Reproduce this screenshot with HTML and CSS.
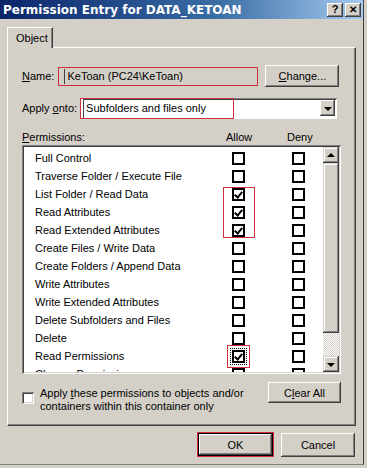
FILE: index.html
```html
<!DOCTYPE html>
<html lang="en">
<head>
    <meta charset="UTF-8">
    <title>Permission Entry for DATA_KETOAN</title>
    <link rel="stylesheet" href="styles.css">
</head>
<body>

<div class="window">
    <div class="titlebar">
        <span class="title">Permission Entry for DATA_KETOAN</span>
        <span class="title-btn">?</span>
        <span class="title-btn close">&#x2715;</span>
    </div>

    <div class="content">
        <div class="tabs">
            <span class="tab">Object</span>
        </div>

        <div class="tab-page">
            <div class="name-row">
                <span class="label"><u>N</u>ame:</span>
                <span class="mark name-mark">
                    <span class="name-field">KeToan (PC24\KeToan)</span>
                </span>
                <span class="button change-btn"><u>C</u>hange...</span>
            </div>

            <div class="apply-row">
                <span class="label">Apply <u>o</u>nto:</span>
                <div class="combo">
                    <span class="mark combo-mark">Subfolders and files only</span>
                    <span class="combo-arrow"><span class="tri-down"></span></span>
                </div>
            </div>

            <div class="perm-head">
                <span><u>P</u>ermissions:</span>
                <span class="col-allow">Allow</span>
                <span class="col-deny">Deny</span>
            </div>

            <div class="listbox">
                <div class="rows">
                    <div class="row"><span>Full Control</span><span class="cb"></span><span class="cb"></span></div>
                    <div class="row"><span>Traverse Folder / Execute File</span><span class="cb"></span><span class="cb"></span></div>
                    <div class="row"><span>List Folder / Read Data</span><span class="cb on"></span><span class="cb"></span></div>
                    <div class="row"><span>Read Attributes</span><span class="cb on"></span><span class="cb"></span></div>
                    <div class="row"><span>Read Extended Attributes</span><span class="cb on"></span><span class="cb"></span></div>
                    <div class="row"><span>Create Files / Write Data</span><span class="cb"></span><span class="cb"></span></div>
                    <div class="row"><span>Create Folders / Append Data</span><span class="cb"></span><span class="cb"></span></div>
                    <div class="row"><span>Write Attributes</span><span class="cb"></span><span class="cb"></span></div>
                    <div class="row"><span>Write Extended Attributes</span><span class="cb"></span><span class="cb"></span></div>
                    <div class="row"><span>Delete Subfolders and Files</span><span class="cb"></span><span class="cb"></span></div>
                    <div class="row"><span>Delete</span><span class="cb"></span><span class="cb"></span></div>
                    <div class="row"><span>Read Permissions</span><span class="cb on focus"></span><span class="cb"></span></div>
                    <div class="row"><span>Change Permissions</span><span class="cb"></span><span class="cb"></span></div>
                </div>
                <div class="scrollbar">
                    <span class="sb-btn"><span class="tri-up"></span></span>
                    <span class="sb-thumb"></span>
                    <span class="sb-track"></span>
                    <span class="sb-btn"><span class="tri-down"></span></span>
                </div>
                <span class="allow-mark"></span>
            </div>

            <div class="bottom-row">
                <span class="cb sunken"></span>
                <span class="apply-text">Apply <u>t</u>hese permissions to objects and/or<br>containers within this container only</span>
                <span class="button clear-btn">C<u>l</u>ear All</span>
            </div>
        </div>

        <div class="footer">
            <span class="ok-mark"><span class="button ok-btn">OK</span></span>
            <span class="button cancel-btn">Cancel</span>
        </div>
    </div>
</div>

</body>
</html>
```

FILE: styles.css
```css
body {
    margin: 0;
    background: #d4d0c8;
    font-family: "Liberation Sans", Arial, sans-serif;
    font-size: 11px;
    color: #000;
}

u {
    text-decoration: underline;
}

.window {
    width: 364px;
    height: 465px;
    border-right: 1px solid #404040;
    border-bottom: 1px solid #808080;
    box-sizing: border-box;
    background: #d4d0c8;
}

/* title bar */
.titlebar {
    height: 19px;
    display: flex;
    align-items: center;
    padding: 0 2px 0 3px;
    background: linear-gradient(to right, #0a246a, #3a6ea5 60%, #a6caf0);
}

.title {
    flex: 1;
    color: #fff;
    font-family: "DejaVu Sans", sans-serif;
    font-weight: bold;
    font-size: 12px;
}

.title-btn {
    width: 16px;
    height: 14px;
    margin-left: 2px;
    display: flex;
    align-items: center;
    justify-content: center;
    font-weight: bold;
    font-size: 11px;
    line-height: 1;
    background: #d4d0c8;
    box-shadow: inset -1px -1px #404040, inset 1px 1px #fff, inset -2px -2px #808080;
}

.title-btn.close {
    font-size: 10px;
}

/* dialog body */
.content {
    padding: 8px 7px 0 7px;
}

.tabs {
    display: flex;
    height: 20px;
    position: relative;
    z-index: 1;
}

.tab {
    width: 46px;
    height: 21px;
    box-sizing: border-box;
    padding: 4px 0 0 8px;
    border-left: 1px solid #fff;
    border-top: 1px solid #fff;
    border-right: 1px solid #404040;
    box-shadow: inset -1px 0 #808080;
    background: #d4d0c8;
}

.tab-page {
    width: 349px;
    box-sizing: border-box;
    height: 379px;
    border-left: 1px solid #fff;
    border-top: 1px solid #fff;
    border-right: 1px solid #404040;
    border-bottom: 1px solid #404040;
    box-shadow: inset -1px -1px #808080;
    padding: 17px 0 0 14px;
}

.button {
    display: flex;
    align-items: center;
    justify-content: center;
    box-sizing: border-box;
    background: #d4d0c8;
    box-shadow: inset -1px -1px #404040, inset 1px 1px #fff, inset -2px -2px #808080;
}

.mark {
    border: 1px solid #d0303c;
    box-sizing: border-box;
}

/* name row */
.name-row {
    display: flex;
    align-items: center;
    height: 22px;
}

.name-mark {
    margin-left: 4px;
    width: 200px;
    height: 19px;
    padding-left: 5px;
    display: flex;
    align-items: center;
}

.name-field {
    border-left: 1px solid #404040;
    padding-left: 2px;
    height: 15px;
    line-height: 15px;
}

.change-btn {
    margin-left: 7px;
    width: 74px;
    height: 22px;
}

/* apply onto row */
.apply-row {
    display: flex;
    align-items: center;
    margin-top: 11px;
    height: 20px;
}

.combo {
    margin-left: 3px;
    width: 257px;
    height: 21px;
    box-sizing: border-box;
    display: flex;
    align-items: center;
    background: #fff;
    box-shadow: inset 1px 1px #808080, inset -1px -1px #fff, inset 2px 2px #404040;
    padding-right: 2px;
}

.combo-mark {
    width: 154px;
    height: 21px;
    display: flex;
    align-items: center;
    box-shadow: inset 2px 0 #fff, inset 3px 0 #404040;
    padding-left: 5px;
}

.combo-arrow {
    margin-left: auto;
    width: 15px;
    height: 16px;
    display: flex;
    align-items: center;
    justify-content: center;
    background: #d4d0c8;
    box-shadow: inset -1px -1px #404040, inset 1px 1px #fff, inset -2px -2px #808080;
}

.tri-down {
    border-left: 4px solid transparent;
    border-right: 4px solid transparent;
    border-top: 4px solid #000;
    margin-top: 1px;
}

.tri-up {
    border-left: 4px solid transparent;
    border-right: 4px solid transparent;
    border-bottom: 4px solid #000;
}

/* permissions header */
.perm-head {
    display: grid;
    grid-template-columns: 204px 61px 1fr;
    margin-top: 12px;
    height: 15px;
    line-height: 15px;
}

/* permission list */
.listbox {
    position: relative;
    display: flex;
    width: 319px;
    height: 229px;
    box-sizing: border-box;
    padding: 2px;
    background: #fff;
    box-shadow: inset 1px 1px #808080, inset -1px -1px #fff, inset 2px 2px #404040, inset -2px -2px #d4d0c8;
}

.rows {
    flex: 1;
    overflow: hidden;
    padding-top: 2px;
}

.row {
    display: grid;
    grid-template-columns: 197px 13px 47px 13px;
    align-items: center;
    height: 18px;
    padding-left: 11px;
}

.row span:nth-child(3) {
    grid-column: 4;
}

.cb {
    width: 13px;
    height: 13px;
    box-sizing: border-box;
    border: 2px solid #000;
    background: #fff;
    position: relative;
}

.cb.on::after {
    content: "";
    position: absolute;
    left: 2px;
    top: 0;
    width: 3px;
    height: 6px;
    border-right: 2px solid #000;
    border-bottom: 2px solid #000;
    transform: rotate(40deg);
}

.cb.focus {
    outline: 1px dotted #000;
    outline-offset: 1px;
    box-shadow: 0 0 0 4px #fff, 0 0 0 5px #d0303c;
}

.scrollbar {
    width: 16px;
    display: flex;
    flex-direction: column;
}

.sb-btn {
    height: 16px;
    display: flex;
    align-items: center;
    justify-content: center;
    background: #d4d0c8;
    box-shadow: inset -1px -1px #404040, inset 1px 1px #d4d0c8, inset -2px -2px #808080, inset 2px 2px #fff;
}

.sb-thumb {
    height: 170px;
    background: #d4d0c8;
    box-shadow: inset -1px -1px #404040, inset 1px 1px #d4d0c8, inset -2px -2px #808080, inset 2px 2px #fff;
}

.sb-track {
    flex: 1;
    background-image: conic-gradient(#fff 25%, #d4d0c8 0 50%, #fff 0 75%, #d4d0c8 0);
    background-size: 2px 2px;
}

.allow-mark {
    position: absolute;
    left: 201px;
    top: 42px;
    width: 32px;
    height: 51px;
    border: 1px solid #d0303c;
    box-sizing: border-box;
}

/* bottom row */
.bottom-row {
    display: flex;
    align-items: flex-start;
    margin-top: 8px;
    width: 319px;
}

.cb.sunken {
    margin-top: 10px;
    width: 12px;
    height: 12px;
    border: none;
    box-shadow: inset 1px 1px #808080, inset -1px -1px #fff, inset 2px 2px #404040, inset -2px -2px #d4d0c8;
}

.apply-text {
    margin-left: 6px;
    margin-top: 5px;
    line-height: 13px;
}

.clear-btn {
    margin-left: auto;
    width: 73px;
    height: 21px;
}

/* footer buttons */
.footer {
    display: flex;
    justify-content: flex-end;
    gap: 7px;
    margin-top: 6px;
    width: 348px;
}

.ok-mark {
    border: 1px solid #d0303c;
}

.ok-btn {
    width: 75px;
    height: 23px;
    box-shadow: inset 0 0 0 1px #000, inset -2px -2px #404040, inset 2px 2px #fff, inset -3px -3px #808080;
}

.cancel-btn {
    width: 74px;
    height: 24px;
    margin-top: 1px;
}
```
